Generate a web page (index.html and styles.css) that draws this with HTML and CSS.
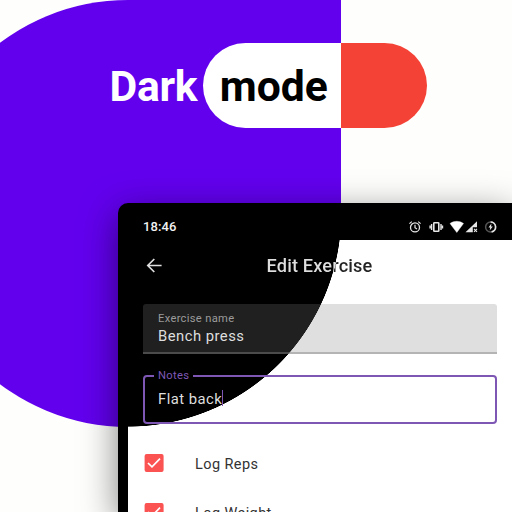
FILE: index.html
```
<!DOCTYPE html>
<html lang="en">
<head>
<meta charset="utf-8">
<title>Dark mode</title>
<link rel="stylesheet" href="styles.css">
</head>
<body>
<div class="blob"></div>
<header class="hero">
  <span class="hero-dark">Dark</span>
  <span class="pill">mode</span>
</header>
<main class="phone">
  <div class="status">
    <span class="time">18:46</span>
    <svg class="status-icons" width="90" height="14" viewBox="0 0 90 14" fill="none" stroke="#e6e6e6">
      <circle cx="7" cy="7.4" r="4.5" stroke-width="1.3"/>
      <path d="M7 4.7v3l2 1.2M1.4 3.6l2.4-2M12.6 3.6l-2.4-2" stroke-width="1.2"/>
      <rect x="25.8" y="2.7" width="5" height="8.6" rx=".6" stroke-width="1.6"/>
      <path d="M23.600 4v6M33 4v6M22.100 5.500v3M34.500 5.500v3" stroke-width="1.400"/>
      <path d="M42 3.500C46 .6 51.500 .6 55.500 3.500L48.800 12.500Z" fill="#fff" stroke="#fff" stroke-width=".4"/>
      <path d="M57.500 12.300L69 1.200V7.200H64.800V12.300Z" fill="#e6e6e6" stroke="none"/>
      <path d="M66 8.800l3 3M69 8.800l-3 3" stroke-width="1.100"/>
      <circle cx="82.600" cy="7" r="5" stroke="#555" stroke-width="1.500"/>
      <path d="M82.600 2a5 5 0 0 1 1 9.900" stroke-width="1.600"/>
      <path d="M83.400 3.600L80.500 7.600h1.700l-.5 3L84.800 6.500h-1.700Z" fill="#e6e6e6" stroke="none"/>
    </svg>
  </div>
  <section class="screen">
    <div class="appbar">
      <svg class="back" width="18" height="18" viewBox="0 0 18 18" fill="none" stroke="#dedede" stroke-width="1.700"><path d="M16.600 8.500H3M9.300 2L2.800 8.500l6.500 6.500"/></svg>
      <h1 class="title">Edit Exercise</h1>
    </div>
    <div class="filled">
      <span class="label">Exercise name</span>
      <span class="value">Bench press</span>
    </div>
    <fieldset class="outlined">
      <legend class="legend">Notes</legend>
      <span class="value">Flat back</span><i class="caret"></i>
    </fieldset>
    <div class="option">
      <svg class="check" width="20" height="20" viewBox="0 0 20 20"><rect x=".6" y="1" width="19" height="18" rx="2" fill="#fb5252"/><path d="M4 10l4 3.900 8-8.200" fill="none" stroke="#fff" stroke-width="1.700"/></svg>
      <span class="option-name">Log Reps</span>
    </div>
    <div class="option">
      <svg class="check" width="20" height="20" viewBox="0 0 20 20"><rect x=".6" y="1" width="19" height="18" rx="2" fill="#fb5252"/><path d="M4 10l4 3.900 8-8.200" fill="none" stroke="#fff" stroke-width="1.700"/></svg>
      <span class="option-name">Log Weight</span>
    </div>
  </section>
</main>
</body>
</html>
```
FILE: styles.css
```
* { box-sizing: border-box; }

html { background: #fefefd; }

body {
  margin: 0;
  width: 512px;
  height: 512px;
  overflow: hidden;
  position: relative;
  font-family: Roboto, sans-serif;
}

.blob {
  position: absolute;
  left: -85.300px;
  top: 0;
  width: 426.600px;
  height: 426.600px;
  border-radius: 50% 0 50% 50%;
  background: #6200ee;
}

.hero {
  position: relative;
  display: flex;
  align-items: center;
  height: 203px;
  padding: 42.500px 0 75px 109.500px;
  font-size: 42.670px;
  font-weight: 700;
}

.hero-dark {
  width: 93.500px;
  padding-top: 2px;
  color: #fff;
  letter-spacing: -.3px;
}

.pill {
  display: flex;
  align-items: center;
  width: 224px;
  height: 85.500px;
  padding: 2px 0 0 16.700px;
  border-radius: 43px;
  background: linear-gradient(90deg, #fff 138.300px, #f44336 138.300px);
  color: #000;
}

.phone {
  position: relative;
  margin-left: 117.500px;
  width: 394.500px;
  height: 309px;
  padding-left: 10.500px;
  border-radius: 10px 0 0 0;
  background: #000;
  box-shadow: 0 10px 36px rgba(0, 0, 0, .5);
}

.status {
  display: flex;
  align-items: center;
  gap: 232px;
  height: 37px;
  padding: 10px 0 0 15px;
}

.time {
  width: 34px;
  color: #f2f2f2;
  font-size: 13px;
  font-weight: 500;
  letter-spacing: .1px;
}

.status-icons {
  flex: none;
  margin-left: -1.500px;
}

.screen {
  height: 272px;
  overflow: hidden;
  padding-left: 15px;
  background: radial-gradient(circle at 128px 213.300px, #000 213px, #fff 213.600px) fixed;
}

.appbar {
  display: flex;
  align-items: center;
  height: 64px;
  padding: 0 0 13px 2px;
}

.title {
  margin: 0 0 0 103.500px;
  background: radial-gradient(circle at 128px 213.300px, #dedede 213px, #242424 213.600px) fixed;
  -webkit-background-clip: text;
  background-clip: text;
  color: transparent;
  font-size: 18.200px;
  font-weight: 500;
  letter-spacing: .15px;
}

.filled {
  display: flex;
  flex-direction: column;
  width: 354px;
  height: 50px;
  padding: 8px 15px 0;
  border-bottom: 2px solid rgba(128, 128, 128, .45);
  border-radius: 3px 3px 0 0;
  background: radial-gradient(circle at 128px 213.300px, #202020 213px, #dfdfdf 213.600px) fixed;
}

.label {
  color: #9b9b9b;
  font-size: 11.200px;
  line-height: 14px;
  letter-spacing: .3px;
}

.value {
  color: #dedede;
  font-size: 14.800px;
  line-height: 21px;
  letter-spacing: .48px;
}

.outlined {
  display: flex;
  align-items: center;
  width: 354px;
  height: 56px;
  margin: 14px 0 0;
  padding: 0 13px 6px;
  border: 2px solid #7e57b5;
  border-radius: 4px;
}

.legend {
  margin-left: -4px;
  padding: 0 4px;
  color: #7e57b5;
  font-size: 11.200px;
  line-height: 15px;
  letter-spacing: .3px;
}

.caret {
  width: 1.500px;
  height: 16px;
  margin: -3px 0 0 -.5px;
  background: #7e57b5;
}

.option {
  display: flex;
  align-items: center;
  gap: 31px;
  height: 20px;
  margin: 29px 0 0 1px;
}

.option-name {
  padding-top: 2px;
  color: #333;
  font-size: 14.500px;
  letter-spacing: .42px;
}
```
